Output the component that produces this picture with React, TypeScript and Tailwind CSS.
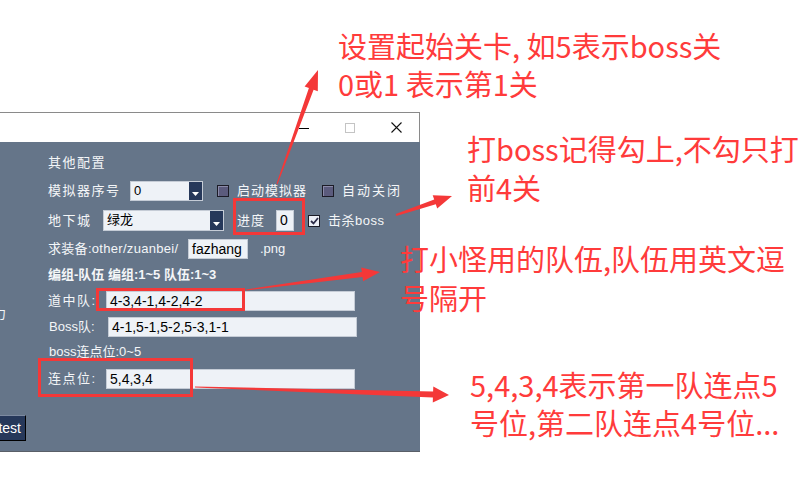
import * as React from "react";

const cjk = { fontFamily: '"Liberation Sans", "Noto Sans CJK SC", sans-serif' };
const note = { fontFamily: '"Noto Sans CJK SC", sans-serif' };

function Select({ value, className }: { value: string; className: string }) {
  return (
    <div className={`flex h-full border border-[#c5ccd6] bg-[#eef2f7] ${className}`}>
      <span className="flex-1 pl-[3px] text-[13px] leading-[18px] text-black">{value}</span>
      <span className="flex w-[13px] items-end justify-center bg-[#26385a] pb-[3px]">
        <svg width="7" height="5" viewBox="0 0 7 5">
          <path d="M0 0h7L3.5 4z" fill="#fff" />
        </svg>
      </span>
    </div>
  );
}

function Input({ value, className }: { value: string; className: string }) {
  return (
    <div
      className={`h-full border border-[#c5ccd6] bg-[#eef2f7] pl-[3px] text-[14px] leading-[18px] text-black ${className}`}
    >
      {value}
    </div>
  );
}

function Check({ checked = false }: { checked?: boolean }) {
  return checked ? (
    <span className="flex h-[12px] w-[12px] shrink-0 items-center justify-center border border-[#1b1b26] bg-[#eceff6]">
      <svg width="9" height="8" viewBox="0 0 9 8">
        <path d="M1 4l2.5 2.5L8 1" stroke="#2c2c48" strokeWidth="1.8" fill="none" />
      </svg>
    </span>
  ) : (
    <span className="block h-[12px] w-[12px] shrink-0 border border-[#1b1b26] bg-[#5b5b7d] shadow-[inset_1px_1px_0_#8a8aa8]" />
  );
}

type Arrow = { x1: number; y1: number; x2: number; y2: number; w0: number; w1: number; len: number; hw: number };

const arrows: Arrow[] = [
  { x1: 277, y1: 184, x2: 318, y2: 70, w0: 1, w1: 5, len: 20, hw: 7 },
  { x1: 396, y1: 215, x2: 452, y2: 196, w0: 2, w1: 5, len: 18, hw: 7 },
  { x1: 246, y1: 290, x2: 380, y2: 272, w0: 1, w1: 5, len: 18, hw: 7 },
  { x1: 195, y1: 387, x2: 449, y2: 395, w0: 1, w1: 6, len: 16, hw: 8 },
];

function arrowPoints(a: Arrow) {
  const dx = a.x2 - a.x1;
  const dy = a.y2 - a.y1;
  const d = Math.hypot(dx, dy);
  const ux = dx / d;
  const uy = dy / d;
  const nx = -uy;
  const ny = ux;
  const bx = a.x2 - ux * a.len;
  const by = a.y2 - uy * a.len;
  const p = (x: number, y: number) => `${x.toFixed(1)},${y.toFixed(1)}`;
  return [
    p(a.x1 + (nx * a.w0) / 2, a.y1 + (ny * a.w0) / 2),
    p(bx + (nx * a.w1) / 2, by + (ny * a.w1) / 2),
    p(bx + nx * a.hw, by + ny * a.hw),
    p(a.x2, a.y2),
    p(bx - nx * a.hw, by - ny * a.hw),
    p(bx - (nx * a.w1) / 2, by - (ny * a.w1) / 2),
    p(a.x1 - (nx * a.w0) / 2, a.y1 - (ny * a.w0) / 2),
  ].join(" ");
}

export default function App() {
  return (
    <div className="relative h-[481px] w-[805px] overflow-hidden bg-white">
      <div className="pt-[112px]">
        <div className="w-[420px]">
          {/* title bar */}
          <div className="flex h-[30px] items-center justify-end border-r border-t border-[#8a8a8a] bg-white">
            <span className="flex w-[46px] justify-center">
              <span className="mt-[1px] h-px w-[10px] bg-black" />
            </span>
            <span className="flex w-[46px] justify-center">
              <span className="h-[10px] w-[10px] border border-[#c4c4c4]" />
            </span>
            <span className="flex w-[46px] justify-center">
              <svg width="11" height="11" viewBox="0 0 11 11">
                <path d="M0.5 0.5l10 10M10.5 0.5l-10 10" stroke="#111" strokeWidth="1.1" />
              </svg>
            </span>
          </div>

          {/* body */}
          <div className="flex h-[310px] border-b border-[#5a5f68] bg-[#657589] text-[13px] text-[#f4f6f8]" style={cjk}>
            <div className="flex w-[48px] flex-col">
              <span className="-ml-[7px] mt-[165px] leading-[14px]">力</span>
              <button className="-ml-[10px] mt-[94px] h-[26px] w-[36px] border-b border-r border-t border-b-black border-r-black border-t-[#7d8aa0] bg-[#26385a] pr-[4px] text-right text-[14px] leading-[22px] text-white">
                test
              </button>
            </div>

            <div className="flex flex-col">
              <div className="mt-[10px] flex h-[22px] items-center tracking-[1.5px]">其他配置</div>

              <div className="mt-[7px] flex h-[20px] items-center">
                <span className="w-[82px] tracking-[1.5px]">模拟器序号</span>
                <Select value="0" className="w-[73px]" />
                <span className="ml-[14px] flex">
                  <Check />
                </span>
                <span className="ml-[8px] w-[85px] tracking-[1px]">启动模拟器</span>
                <Check />
                <span className="ml-[8px] tracking-[2px]">自动关闭</span>
              </div>

              <div className="mt-[9px] flex h-[21px] items-center">
                <span className="w-[55px] tracking-[1.5px]">地下城</span>
                <Select value="绿龙" className="w-[121px]" />
                <span className="ml-[13px] w-[39px] tracking-[1px]">进度</span>
                <Input value="0" className="w-[18px]" />
                <span className="ml-[14px] flex">
                  <Check checked />
                </span>
                <span className="ml-[8px] tracking-[0.5px]">击杀boss</span>
              </div>

              <div className="mt-[8px] flex h-[20px] items-center">
                <span className="w-[140px] tracking-[0.3px]">求装备:other/zuanbei/</span>
                <Input value="fazhang" className="w-[60px]" />
                <span className="ml-[12px]">.png</span>
              </div>

              <div className="mt-[6px] flex h-[20px] items-center font-bold">
                编组-队伍 编组:1~5 队伍:1~3
              </div>

              <div className="mt-[6px] flex h-[20px] items-center">
                <span className="w-[58px] tracking-[1.5px]">道中队:</span>
                <Input value="4-3,4-1,4-2,4-2" className="w-[249px]" />
              </div>

              <div className="mt-[6px] flex h-[20px] items-center">
                <span className="w-[60px] pl-[1px]">Boss队:</span>
                <Input value="4-1,5-1,5-2,5-3,1-1" className="w-[249px]" />
              </div>

              <div className="mt-[5px] flex h-[20px] items-center pl-[1px]">boss连点位:0~5</div>

              <div className="mt-[7px] flex h-[20px] items-center">
                <span className="w-[58px] tracking-[1.5px]">连点位:</span>
                <Input value="5,4,3,4" className="w-[249px]" />
              </div>
            </div>
          </div>
        </div>
      </div>

      {/* annotation boxes */}
      <div className="absolute left-[233px] top-[198px] h-[37px] w-[72px] border-[3px] border-[#f43838]" />
      <div className="absolute left-[96px] top-[288px] h-[23px] w-[149px] border-[3px] border-[#f43838]" />
      <div className="absolute left-[38px] top-[358px] h-[39px] w-[155px] border-[3px] border-[#f43838]" />

      {/* annotation notes */}
      <div className="absolute left-[338px] top-[26px] text-[29px] leading-[38px] text-[#ff3b3b]" style={note}>
        <div>设置起始关卡, 如5表示boss关</div>
        <div>0或1 表示第1关</div>
      </div>
      <div className="absolute left-[467px] top-[129px] text-[29px] leading-[39px] text-[#ff3b3b]" style={note}>
        <div>打boss记得勾上,不勾只打</div>
        <div>前4关</div>
      </div>
      <div className="absolute left-[400px] top-[239px] text-[29px] leading-[39px] text-[#ff3b3b]" style={note}>
        <div>打小怪用的队伍,队伍用英文逗</div>
        <div>号隔开</div>
      </div>
      <div className="absolute left-[470px] top-[365px] text-[29px] leading-[38px] text-[#ff3b3b]" style={note}>
        <div>5,4,3,4表示第一队连点5</div>
        <div>号位,第二队连点4号位...</div>
      </div>

      <svg className="pointer-events-none absolute left-0 top-0" width="805" height="481">
        {arrows.map((a, i) => (
          <polygon key={i} points={arrowPoints(a)} fill="#f43838" />
        ))}
      </svg>
    </div>
  );
}
